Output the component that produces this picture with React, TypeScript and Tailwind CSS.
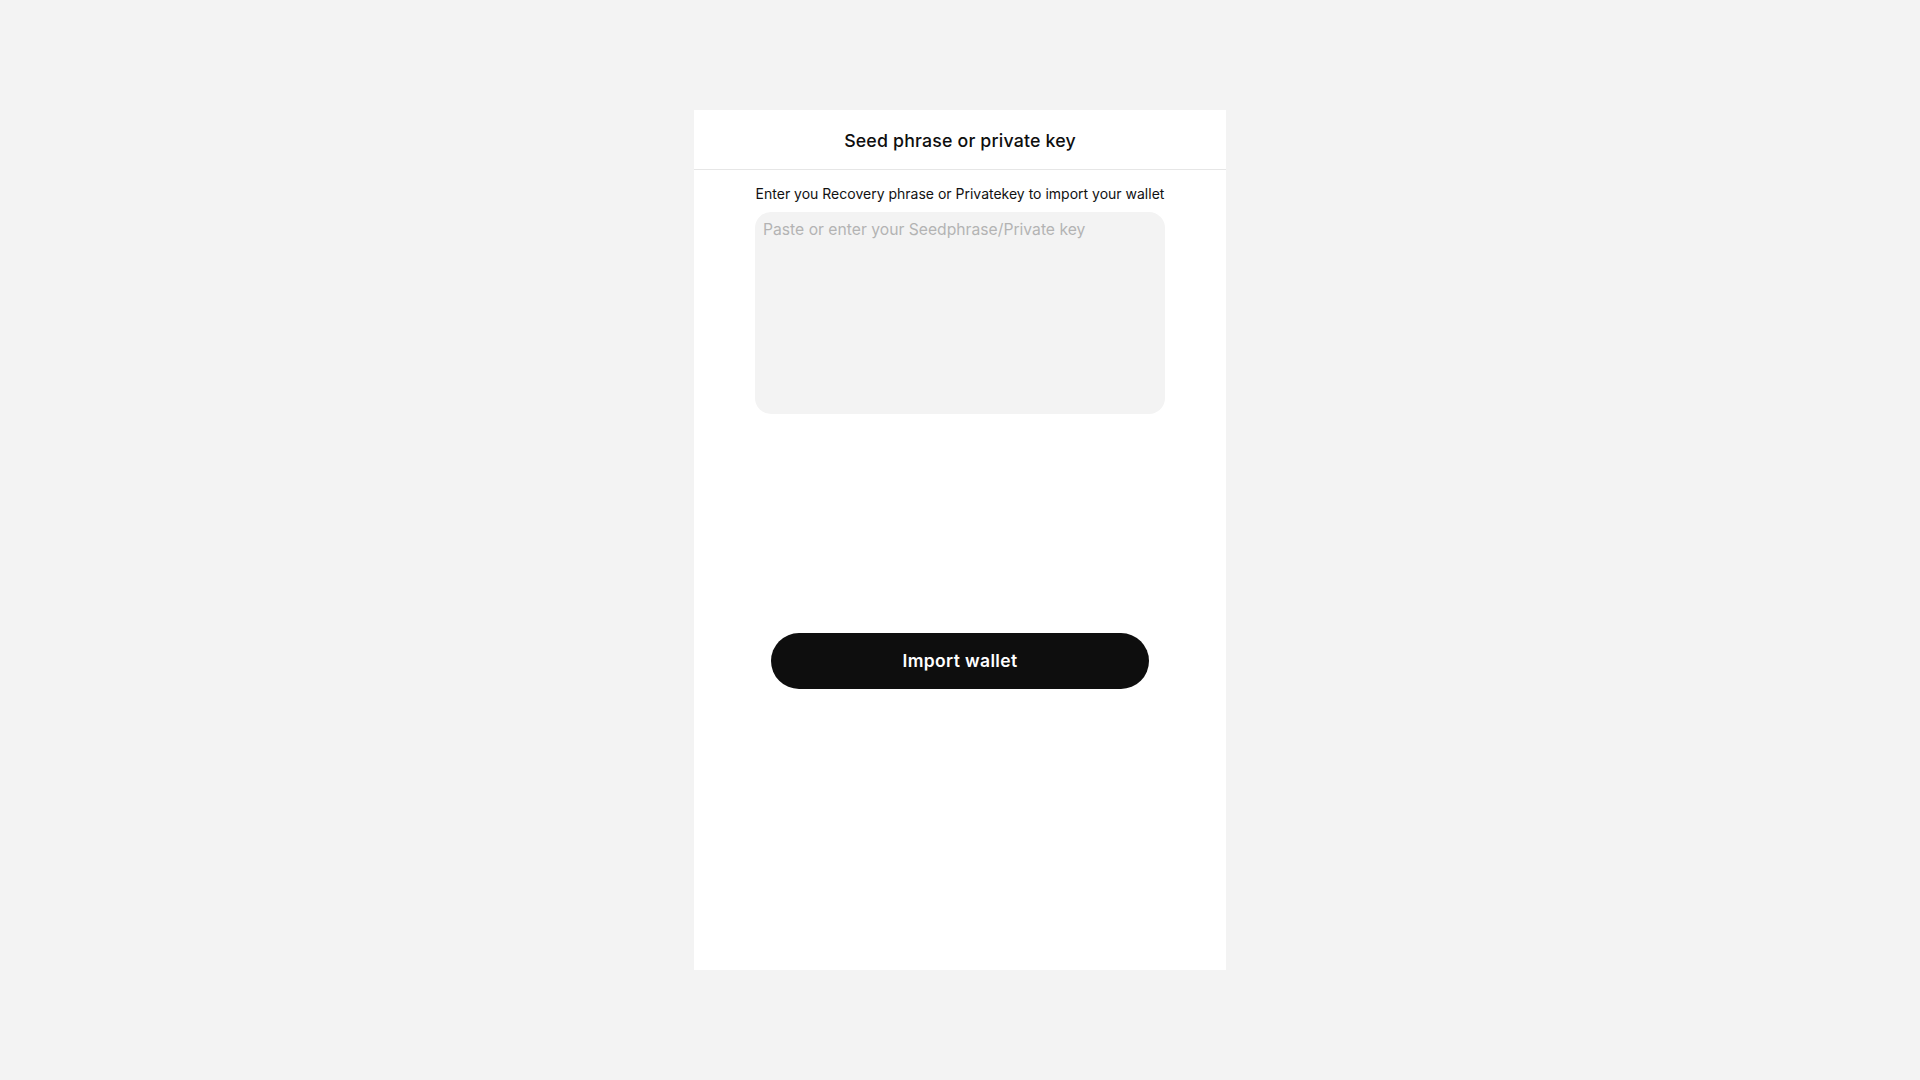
export default function App() {
  return (
    <div className="min-h-screen bg-[#f3f3f3] flex justify-center pt-[110px] font-['Inter',sans-serif] text-[#0e0e0e]">
      <div className="w-[532px] h-[860px] bg-white flex flex-col">
        {/* Header */}
        <div className="h-[60px] border-b border-[#e6e6e6] flex items-center justify-center pt-[3px]">
          <h1 className="text-[17.75px] font-medium tracking-[0.01em]">Seed phrase or private key</h1>
        </div>

        {/* Body */}
        <div className="px-[61px] pt-[14px] flex flex-col">
          <p className="text-[14px] leading-[20px] text-center text-[#111]">
            Enter you Recovery phrase or Privatekey to import your wallet
          </p>
          <textarea
            className="mt-[8px] h-[202px] w-full resize-none rounded-[16px] bg-[#f3f3f3] px-[8px] py-[7px] text-[15.7px] leading-[22px] outline-none placeholder:text-[#b3b3b3]"
            placeholder="Paste or enter your Seedphrase/Private key"
          />
          <div className="mt-[219px] flex justify-center">
            <button className="h-[56px] w-[378px] rounded-full bg-[#0e0e0e] text-white text-[17.5px] font-semibold tracking-[0.02em]">
              Import wallet
            </button>
          </div>
        </div>
      </div>
    </div>
  );
}
